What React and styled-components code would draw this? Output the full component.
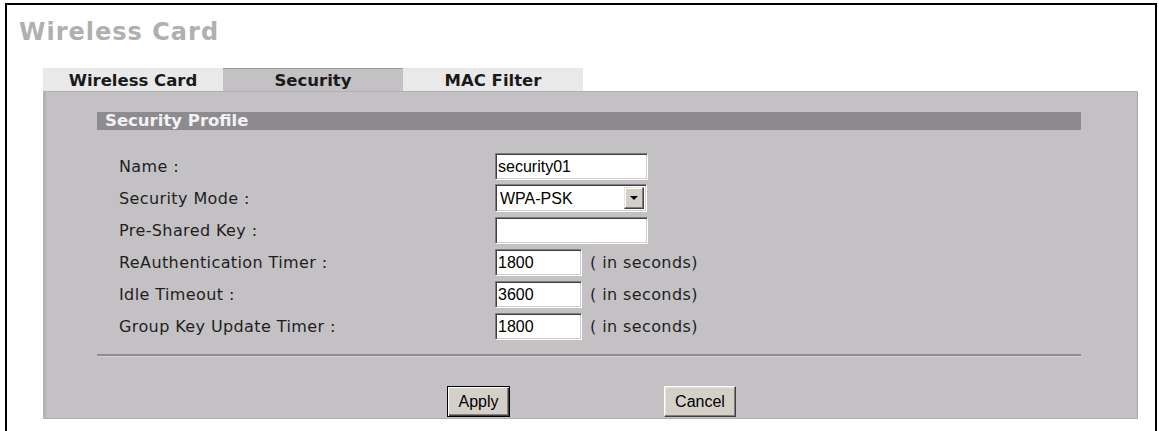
import React from "react";
import styled, { createGlobalStyle } from "styled-components";

const GlobalStyle = createGlobalStyle`
  html, body { margin: 0; padding: 0; background: #ffffff; }
  body { font-family: "DejaVu Sans", Verdana, sans-serif; }
`;

const Frame = styled.div`
  margin: 3px 2px 0 5px;
  border: 2px solid #000;
  border-bottom: 0;
  min-height: 440px;
  box-sizing: border-box;
`;

const Title = styled.h1`
  margin: 0;
  padding: 13px 0 0 12px;
  font-family: "DejaVu Sans", Verdana, sans-serif;
  font-size: 24px;
  font-weight: bold;
  line-height: 28px;
  letter-spacing: 1px;
  color: #b0b0b0;
`;

const TabBar = styled.div`
  display: flex;
  margin: 22px 0 0 36px;
  height: 23px;
`;

const Tab = styled.div`
  width: 180px;
  height: 23px;
  box-sizing: border-box;
  text-align: center;
  font-size: 16.5px;
  font-weight: bold;
  line-height: 23px;
  color: #1a1a1a;
  background: ${(p) => (p.$active ? "#c4c1c5" : "#e9e9e9")};
  border-top: 1px solid ${(p) => (p.$active ? "#9c999d" : "#e9e9e9")};
`;

const Panel = styled.div`
  margin: 0 17px 0 36px;
  padding: 0 56px 1px 51px;
  background: #c4c1c5;
  border-top: 1px solid #b2afb3;
  border-left: 3px solid #b6b3b7;
  border-right: 1px solid #a9a6aa;
  border-bottom: 1px solid #b0adb1;
`;

const SectionHeader = styled.div`
  margin-top: 20px;
  height: 18px;
  padding-left: 8px;
  background: #8e8b90;
  color: #f2f2f2;
  font-size: 16.5px;
  font-weight: bold;
  line-height: 18px;
`;

const Form = styled.div`
  margin-top: 20px;
  padding-left: 22px;
  display: grid;
  grid-template-columns: 376px 1fr;
  grid-auto-rows: 32px;
  align-items: center;
`;

const Label = styled.div`
  font-size: 16px;
  letter-spacing: 0.4px;
  color: #1e1e1e;
`;

const Field = styled.div`
  display: flex;
  align-items: center;
`;

const inset = `
  box-sizing: border-box;
  border: 1px solid;
  border-color: #7f7f7f #ffffff #ffffff #7f7f7f;
  box-shadow: inset 1px 1px 0 #404040, inset -1px -1px 0 #d4d0c8;
  background: #fff;
`;

const TextInput = styled.input`
  ${inset}
  width: ${(p) => (p.$short ? "87px" : "153px")};
  height: 27px;
  padding: 2px 3px 0 2px;
  margin: 0;
  font-family: "Liberation Sans", Arial, sans-serif;
  font-size: 16px;
  color: #000;
  outline: none;
`;

const SelectBox = styled.div`
  ${inset}
  width: 152px;
  height: 28px;
  display: flex;
  align-items: stretch;
  padding: 2px;
`;

const SelectValue = styled.div`
  flex: 1;
  padding-left: 2px;
  font-family: "Liberation Sans", Arial, sans-serif;
  font-size: 16px;
  line-height: 24px;
  color: #000;
`;

const ArrowButton = styled.div`
  width: 20px;
  box-sizing: border-box;
  background: #d4d0c8;
  border: 1px solid;
  border-color: #e6e3dd #404040 #404040 #e6e3dd;
  box-shadow: inset -1px -1px 0 #808080, inset 1px 1px 0 #ffffff;
  display: flex;
  align-items: center;
  justify-content: center;

  &::after {
    content: "";
    border-left: 4px solid transparent;
    border-right: 4px solid transparent;
    border-top: 4px solid #000;
  }
`;

const Unit = styled.span`
  margin-left: 8px;
  font-size: 16px;
  letter-spacing: 0.4px;
  color: #1e1e1e;
`;

const Separator = styled.div`
  margin-top: 12px;
  height: 0;
  border-top: 2px solid #8f8c91;
  border-bottom: 1px solid #d2d0d3;
`;

const ButtonRow = styled.div`
  display: flex;
  align-items: flex-end;
  margin-top: 29px;
  padding-left: 350px;
  gap: 154px;
`;

const Button = styled.button`
  box-sizing: border-box;
  width: ${(p) => p.$w}px;
  height: 31px;
  margin: 0;
  padding: 0;
  background: #d4d0c8;
  font-family: "Liberation Sans", Arial, sans-serif;
  font-size: 16px;
  color: #000;
  border: 1px solid;
  border-color: ${(p) => (p.$default ? "#000" : "#ffffff #404040 #404040 #ffffff")};
  box-shadow: ${(p) =>
    p.$default
      ? "inset 1px 1px 0 #ffffff, inset -1px -1px 0 #404040, inset -2px -2px 0 #808080"
      : "inset -1px -1px 0 #808080, inset 1px 1px 0 #e8e6e0"};
`;

const rows = [
  { label: "Name :", type: "text", value: "security01" },
  { label: "Security Mode :", type: "select", value: "WPA-PSK" },
  { label: "Pre-Shared Key :", type: "text", value: "" },
  { label: "ReAuthentication Timer :", type: "short", value: "1800" },
  { label: "Idle Timeout :", type: "short", value: "3600" },
  { label: "Group Key Update Timer :", type: "short", value: "1800" },
];

export default function App() {
  return (
    <>
      <GlobalStyle />
      <Frame>
        <Title>Wireless Card</Title>
        <TabBar>
          <Tab>Wireless Card</Tab>
          <Tab $active>Security</Tab>
          <Tab>MAC Filter</Tab>
        </TabBar>
        <Panel>
          <SectionHeader>Security Profile</SectionHeader>
          <Form>
            {rows.map((r) => (
              <React.Fragment key={r.label}>
                <Label>{r.label}</Label>
                <Field>
                  {r.type === "select" ? (
                    <SelectBox>
                      <SelectValue>{r.value}</SelectValue>
                      <ArrowButton />
                    </SelectBox>
                  ) : (
                    <TextInput readOnly value={r.value} $short={r.type === "short"} />
                  )}
                  {r.type === "short" && <Unit>( in seconds)</Unit>}
                </Field>
              </React.Fragment>
            ))}
          </Form>
          <Separator />
          <ButtonRow>
            <Button $default $w={63}>Apply</Button>
            <Button $w={72}>Cancel</Button>
          </ButtonRow>
        </Panel>
      </Frame>
    </>
  );
}
